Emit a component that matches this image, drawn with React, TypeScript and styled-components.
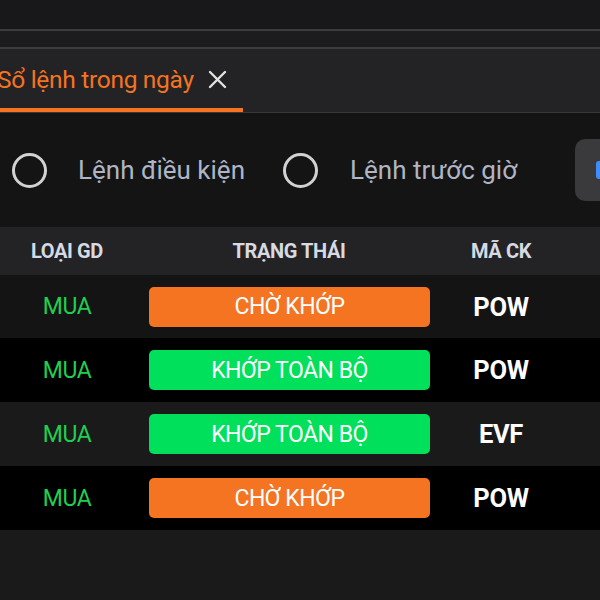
import React from 'react';
import styled, { createGlobalStyle } from 'styled-components';

const GlobalStyle = createGlobalStyle`
  html, body {
    margin: 0;
    padding: 0;
    background: #141414;
    overflow: hidden;
  }
  body {
    font-family: Roboto, "Liberation Sans", sans-serif;
  }
`;

const Page = styled.div`
  width: 600px;
  height: 600px;
  background: #1a1a1a;
  display: flex;
  flex-direction: column;
  overflow: hidden;
`;

const TopBar = styled.div`
  height: 29px;
  background: #18181a;
  border-bottom: 2px solid #3c3c3e;
`;

const Strip = styled.div`
  height: 16px;
  background: #1c1c1e;
  border-bottom: 2px solid #3c3c3e;
`;

const TabBar = styled.div`
  height: 63px;
  background: #232325;
  border-bottom: 1px solid #38383a;
  display: flex;
  align-items: stretch;
`;

const Tab = styled.div`
  width: 246px;
  margin-left: -3px;
  display: flex;
  align-items: center;
  gap: 14px;
  box-sizing: border-box;
  border-bottom: 4px solid #f47421;
  padding-top: 2px;
`;

const TabLabel = styled.span`
  color: #f47421;
  font-size: 24.5px;
  letter-spacing: -0.3px;
  white-space: nowrap;
`;

const CloseIcon = styled.svg`
  width: 19px;
  height: 19px;
  flex: none;
`;

const FilterRow = styled.div`
  height: 114px;
  background: #141414;
  display: flex;
  align-items: center;
  padding-left: 12px;
`;

const Radio = styled.span<{ $gapAfter: number }>`
  width: 35px;
  height: 35px;
  box-sizing: border-box;
  border: 3px solid #d2d2d4;
  border-radius: 50%;
  margin-right: ${(p) => p.$gapAfter}px;
  flex: none;
`;

const RadioLabel = styled.span<{ $gapAfter: number }>`
  color: #aeb6c6;
  font-size: 26px;
  margin-right: ${(p) => p.$gapAfter}px;
  white-space: nowrap;
`;

const SideButton = styled.div`
  width: 90px;
  height: 62px;
  border-radius: 10px;
  background: #3a3a3c;
  display: flex;
  align-items: center;
  padding-left: 21px;
  box-sizing: border-box;
  flex: none;
`;

const BlueMark = styled.span`
  width: 10px;
  height: 18px;
  border-radius: 3px;
  background: #3f8cff;
`;

const Grid = styled.div<{ $bg: string; $h: number }>`
  display: grid;
  grid-template-columns: 134px 310px 114px 1fr;
  height: ${(p) => p.$h}px;
  background: ${(p) => p.$bg};
  align-items: center;
`;

const HeadCell = styled.div`
  text-align: center;
  color: #d6dae2;
  font-size: 20px;
  font-weight: 700;
  letter-spacing: -0.4px;
  white-space: nowrap;
`;

const SideCell = styled.div`
  text-align: center;
  color: #1fcf4f;
  font-size: 23px;
  letter-spacing: -0.4px;
`;

const CodeCell = styled.div`
  text-align: center;
  color: #ffffff;
  font-size: 25.5px;
  font-weight: 700;
  letter-spacing: -0.3px;
`;

const BadgeCell = styled.div`
  padding: 0 14px 0 15px;
`;

const Badge = styled.div<{ $tone: 'wait' | 'done' }>`
  height: 40px;
  border-radius: 5px;
  background: ${(p) => (p.$tone === 'wait' ? '#f47421' : '#00e05a')};
  color: #ffffff;
  font-size: 23px;
  letter-spacing: -0.5px;
  display: flex;
  align-items: center;
  justify-content: center;
  white-space: nowrap;
`;

const rows = [
  { side: 'MUA', status: 'CHỜ KHỚP', tone: 'wait' as const, code: 'POW', bg: '#141414' },
  { side: 'MUA', status: 'KHỚP TOÀN BỘ', tone: 'done' as const, code: 'POW', bg: '#000000' },
  { side: 'MUA', status: 'KHỚP TOÀN BỘ', tone: 'done' as const, code: 'EVF', bg: '#1a1a1a' },
  { side: 'MUA', status: 'CHỜ KHỚP', tone: 'wait' as const, code: 'POW', bg: '#000000' },
];

export default function App() {
  return (
    <Page>
      <GlobalStyle />
      <TopBar />
      <Strip />
      <TabBar>
        <Tab>
          <TabLabel>Sổ lệnh trong ngày</TabLabel>
          <CloseIcon viewBox="0 0 19 19">
            <path d="M2 2 L17 17 M17 2 L2 17" stroke="#e2e2e2" strokeWidth="2.4" strokeLinecap="round" />
          </CloseIcon>
        </Tab>
      </TabBar>
      <FilterRow>
        <Radio $gapAfter={31} />
        <RadioLabel $gapAfter={38}>Lệnh điều kiện</RadioLabel>
        <Radio $gapAfter={32} />
        <RadioLabel $gapAfter={58}>Lệnh trước giờ</RadioLabel>
        <SideButton>
          <BlueMark />
        </SideButton>
      </FilterRow>
      <Grid $bg="#232325" $h={48}>
        <HeadCell>LOẠI GD</HeadCell>
        <HeadCell>TRẠNG THÁI</HeadCell>
        <HeadCell>MÃ CK</HeadCell>
        <HeadCell />
      </Grid>
      {rows.map((r, i) => (
        <Grid key={i} $bg={r.bg} $h={i === 0 ? 63 : 64}>
          <SideCell>{r.side}</SideCell>
          <BadgeCell>
            <Badge $tone={r.tone}>{r.status}</Badge>
          </BadgeCell>
          <CodeCell>{r.code}</CodeCell>
          <CodeCell />
        </Grid>
      ))}
    </Page>
  );
}
